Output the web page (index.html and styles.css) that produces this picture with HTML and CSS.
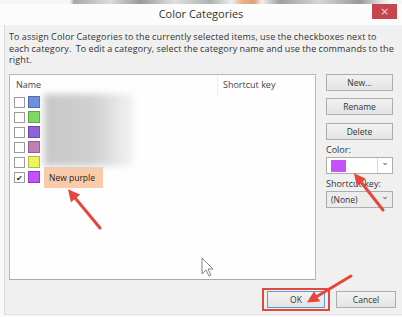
FILE: index.html
```html
<!DOCTYPE html>
<html lang="en">
<head>
  <meta charset="UTF-8">
  <title>Color Categories</title>
  <link rel="stylesheet" href="styles.css">
</head>
<body>

<div class="backdrop"></div>

<div class="dialog">
  <div class="titlebar">
    <span></span>
    <div class="title">Color Categories</div>
    <button class="close">×</button>
  </div>

  <div class="content">
    <p class="intro">To assign Color Categories to the currently selected items, use the checkboxes next to each category.&nbsp; To edit a category, select the category name and use the commands to the right.</p>

    <div class="main">
      <div class="list">
        <div class="list-head">
          <div class="col-name">Name</div>
          <div class="col-key">Shortcut key</div>
        </div>
        <div class="row"><span class="check"></span><span class="swatch" style="background:#6f8fe2"></span></div>
        <div class="row"><span class="check"></span><span class="swatch" style="background:#80d862"></span></div>
        <div class="row"><span class="check"></span><span class="swatch" style="background:#8e62d8"></span></div>
        <div class="row"><span class="check"></span><span class="swatch" style="background:#c27fb4"></span></div>
        <div class="row"><span class="check"></span><span class="swatch" style="background:#eef45c"></span></div>
        <div class="row">
          <span class="check checked">✔</span><span class="swatch" style="background:#c452f8"></span>
          <span class="edit">New purple</span>
        </div>
        <div class="blur"></div>
      </div>

      <div class="side">
        <button class="btn">New...</button>
        <button class="btn">Rename</button>
        <button class="btn">Delete</button>
        <div class="label">Color:</div>
        <div class="select">
          <span class="value"><span class="pick"></span></span>
          <span class="caret">⌄</span>
        </div>
        <div class="label">Shortcut key:</div>
        <div class="select">
          <span class="value">(None)</span>
          <span class="caret">⌄</span>
        </div>
      </div>
    </div>

    <div class="footer">
      <div class="ok-wrap"><button class="btn ok">OK</button></div>
      <button class="btn cancel">Cancel</button>
    </div>
  </div>
</div>

<svg class="notes" width="402" height="317" viewBox="0 0 402 317">
  <defs>
    <marker id="head" markerWidth="4" markerHeight="4" refX="2.4" refY="2" orient="auto">
      <path d="M0,0 L4,2 L0,4 z" fill="#e8463d"/>
    </marker>
  </defs>
  <line x1="100" y1="228" x2="71" y2="193" stroke="#e8463d" stroke-width="3" stroke-linecap="round" marker-end="url(#head)"/>
  <line x1="383" y1="210" x2="357" y2="177" stroke="#e8463d" stroke-width="3" stroke-linecap="round" marker-end="url(#head)"/>
  <line x1="351" y1="276" x2="311" y2="300" stroke="#e8463d" stroke-width="3" stroke-linecap="round" marker-end="url(#head)"/>
  <path d="M202,258 L202,274 L206,270 L209,276 L211,275 L208,269 L213,269 Z" fill="#fff" stroke="#777" stroke-width="0.9"/>
</svg>

</body>
</html>
```

FILE: styles.css
```css
body {
  margin: 0;
  width: 402px;
  height: 317px;
  overflow: hidden;
  background: #f8f8f8;
  font-family: 'Open Sans', 'Noto Sans', sans-serif;
  color: #222;
  position: relative;
}

.backdrop {
  height: 4px;
  background: linear-gradient(90deg, #f6f6f6 0, #f6f6f6 70px, #a8a8a8 74px, #dcdcdc 110px, #9a9a9a 140px,
    #e0e0e0 175px, #b0b0b0 210px, #eee 232px, #eab08a 242px, #e0a07a 254px, #eee 262px,
    #a0a0a0 280px, #d6d6d6 320px, #999 360px, #e6e6e6 382px, #f6f6f6 390px);
}

.dialog {
  height: 311px;
}

.titlebar {
  height: 21px;
  display: grid;
  grid-template-columns: 1fr auto 1fr;
  align-items: start;
  background: #fcfcfc;
}

.title {
  font-size: 11px;
  line-height: 20px;
  color: #333;
}

.close {
  justify-self: end;
  width: 25px;
  height: 15px;
  margin-right: 5px;
  padding: 0;
  border: none;
  background: #c7454d;
  color: #f3d3d5;
  font-size: 11px;
  line-height: 14px;
  font-family: 'DejaVu Sans', sans-serif;
}

.content {
  margin-left: 4px;
  height: 290px;
  background: #f0f0f0;
  border-left: 1px solid #dadada;
  border-bottom: 1px solid #e2e2e2;
  padding: 6px 0 0 4px;
  box-sizing: border-box;
}

.intro {
  margin: 0;
  width: 390px;
  font-size: 9px;
  line-height: 11.5px;
  letter-spacing: 0.16px;
  word-spacing: -0.4px;
  color: #333;
}

.main {
  display: flex;
  margin-top: 8px;
}

.list {
  position: relative;
  width: 307px;
  height: 206px;
  box-sizing: border-box;
  border: 1px solid #b8b8b8;
  border-bottom-color: #a8a8a8;
  background: #fefefe;
}

.list-head {
  display: flex;
  height: 20px;
  font-size: 9px;
  line-height: 20px;
  color: #444;
}

.col-name {
  width: 201px;
  padding-left: 6px;
  border-right: 1px solid #ececec;
}

.col-key {
  padding-left: 5px;
}

.row {
  display: flex;
  align-items: center;
  height: 15px;
  padding-left: 4px;
}

.check {
  width: 9px;
  height: 9px;
  border: 1px solid #9a9a9a;
  background: #fff;
  font-size: 8px;
  line-height: 9px;
  text-align: center;
  color: #333;
}

.swatch {
  width: 12px;
  height: 12px;
  margin-left: 3px;
  box-shadow: inset 0 0 0 1px rgba(0, 0, 0, 0.25);
}

.edit {
  margin-left: 4px;
  height: 21px;
  padding: 0 8px 0 5px;
  background: #fbcba9;
  font-size: 8.5px;
  line-height: 21px;
  color: #222;
}

.blur {
  position: absolute;
  left: 34px;
  top: 19px;
  width: 90px;
  height: 72px;
  background: linear-gradient(90deg, #c8c8c8 0, #d0d0d0 55%, #f5f5f5 100%);
  filter: blur(3px);
}

.side {
  display: flex;
  flex-direction: column;
  width: 67px;
  margin-left: 10px;
}

.btn {
  height: 17px;
  padding: 0;
  border: 1px solid #adadad;
  background: linear-gradient(#f2f2f2, #e4e4e4);
  font-family: inherit;
  font-size: 8.5px;
  color: #333;
  margin-bottom: 7.5px;
}

.label {
  font-size: 9px;
  line-height: 10px;
  color: #333;
  margin: -2px 0 2px;
}

.select {
  display: flex;
  height: 17px;
  border: 1px solid #acacac;
  background: #fff;
  box-sizing: border-box;
  margin-bottom: 7px;
}

.select .value {
  flex: 1;
  display: flex;
  align-items: center;
  padding-left: 4px;
  font-size: 8.5px;
  color: #333;
}

.pick {
  width: 15px;
  height: 12px;
  background: #c452f8;
}

.caret {
  width: 14px;
  border-left: 1px solid #d8d8d8;
  font-size: 9px;
  line-height: 9px;
  text-align: center;
  color: #555;
  font-family: 'DejaVu Sans', sans-serif;
}

.select:last-child .caret {
  border-left: none;
  background: #ececec;
}

.select:last-child {
  background: #ececec;
}

.footer {
  display: flex;
  justify-content: flex-end;
  align-items: center;
  margin-top: 8px;
  padding-right: 6px;
}

.ok-wrap {
  border: 2px solid #e4473f;
  padding: 1px 3px;
  margin-right: 6px;
}

.footer .btn {
  margin: 0;
}

.ok {
  width: 58px;
  border-color: #5b9bd6;
  display: block;
}

.cancel {
  width: 60px;
}

.notes {
  position: absolute;
  left: 0;
  top: 0;
  pointer-events: none;
}
```
